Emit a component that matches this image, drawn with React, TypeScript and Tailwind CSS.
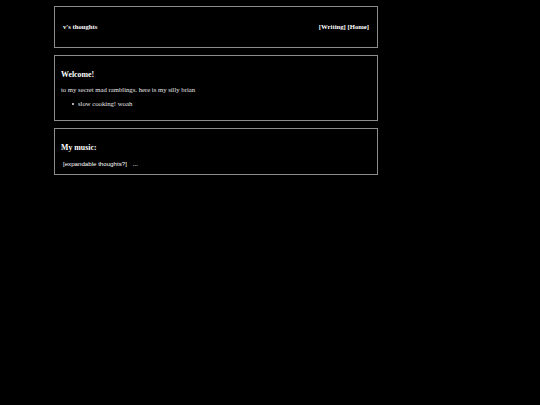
import React from "react";

export default function App() {
  const serif = { fontFamily: '"Liberation Serif", "Times New Roman", serif' };
  return (
    <div className="min-h-[405px] w-full bg-black text-[#e6e6e6]" style={serif}>
      <div className="ml-[54px] flex w-[324px] flex-col gap-[7px] pt-[6px]">
        <div className="flex h-[42px] items-center justify-between border border-[#8c8c8c] px-[8px] text-[6.7px] font-bold leading-[8px] text-white">
          <span>v's thoughts</span>
          <span>[Writing] [Home]</span>
        </div>
        <div className="border border-[#8c8c8c] px-[6px] pb-[12px] pt-[14px]">
          <h3 className="text-[7.85px] font-bold leading-[9px] text-white">Welcome!</h3>
          <p className="mt-[7px] text-[6.7px] leading-[8px]">to my secret mad ramblings. here is my silly brian</p>
          <ul className="mt-[6px] text-[6.7px] leading-[8px]">
            <li className="flex items-center">
              <span className="ml-[11px] mr-[4px] block h-[2px] w-[2px] rounded-full bg-[#e6e6e6]" />
              <span>slow cooking! woah</span>
            </li>
          </ul>
        </div>
        <div className="border border-[#8c8c8c] px-[6px] pb-[6px] pt-[14px]">
          <h3 className="text-[7.85px] font-bold leading-[9px] text-white">My music:</h3>
          <div className="mt-[8px] flex items-center gap-[6px] pl-[2px] leading-[8px]">
            <span
              className="text-[6.15px] font-medium text-white"
              style={{ fontFamily: '"Liberation Sans", Arial, sans-serif' }}
            >
              [expandable thoughts?]
            </span>
            <span className="text-[6.7px]">...</span>
          </div>
        </div>
      </div>
    </div>
  );
}
